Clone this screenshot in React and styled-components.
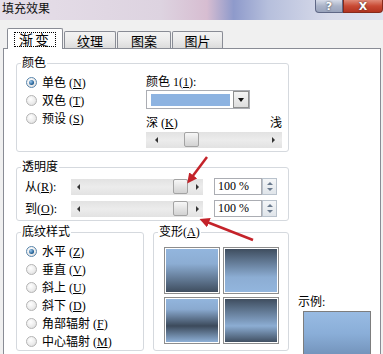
import React from 'react';
import styled, { createGlobalStyle } from 'styled-components';

const GlobalStyle = createGlobalStyle`
  html, body { margin: 0; padding: 0; background: #f0f0f0; }
  body {
    font-family: "Liberation Serif", "Noto Sans CJK SC", serif;
    font-size: 12px;
    color: #000;
  }
`;

const Window = styled.div`
  position: relative;
  width: 383px;
  height: 354px;
  overflow: hidden;
  display: flex;
  flex-direction: column;
  background: #f0f0f0;
`;

const TitleBar = styled.div`
  height: 20px;
  flex: none;
  display: flex;
  align-items: flex-start;
  justify-content: space-between;
  background: linear-gradient(90deg, #e6dfe9 0%, #ddd3e0 42%, #d7bdd1 54%, #8e9acb 61%, #b6bfdc 70%, #d8dbea 86%, #e0e3ef 100%);
`;

const Title = styled.div`
  padding: 1px 0 0 2px;
  line-height: 14px;
  font-family: "Noto Sans CJK SC", sans-serif;
  font-size: 12px;
  color: #111;
`;

const Caption = styled.div`
  display: flex;
`;

const CaptionButton = styled.div`
  width: ${p => p.$w}px;
  height: 13px;
  box-sizing: border-box;
  border: 1px solid ${p => (p.$close ? '#862a1c' : '#5f6886')};
  border-top: none;
  border-radius: ${p => (p.$close ? '0 0 4px 0' : '0 0 0 4px')};
  display: flex;
  align-items: center;
  justify-content: center;
  color: #fff;
  font: bold 11px "DejaVu Sans", sans-serif;
  line-height: 11px;
  background: ${p => (p.$close
    ? 'linear-gradient(#e08a78, #c94a34 50%, #b23320)'
    : 'linear-gradient(#d6dbe8, #aab3c8 50%, #9aa4bc)')};
  text-shadow: 0 0 2px #333;
`;

const Body = styled.div`
  flex: 1;
  min-height: 0;
  display: flex;
  flex-direction: column;
  padding: 8px 2px 0 3px;
`;

const Tabs = styled.div`
  display: flex;
  align-items: flex-start;
  height: 21px;
  margin-bottom: -1px;
  padding-left: 4px;
  gap: 1px;
  position: relative;
  z-index: 1;
`;

const Tab = styled.div`
  box-sizing: border-box;
  width: ${p => p.$w}px;
  height: ${p => (p.$active ? 21 : 17)}px;
  margin-top: ${p => (p.$active ? 0 : 3)}px;
  border: 1px solid #898c95;
  border-bottom: none;
  border-radius: 2px 2px 0 0;
  display: flex;
  align-items: center;
  justify-content: center;
  font-family: "Noto Sans CJK SC", sans-serif;
  font-size: ${p => (p.$active ? 14 : 13)}px;
  background: ${p => (p.$active ? '#fff' : 'linear-gradient(#f3f3f3, #ebebeb 50%, #dcdcdc)')};
`;

const FocusLabel = styled.span`
  border: 1px dotted #000;
  padding: 0 4px;
  line-height: 13px;
  letter-spacing: 2px;
`;

const Panel = styled.div`
  flex: 1;
  background: #fff;
  border: 1px solid #898c95;
  border-bottom: none;
  padding: 7px 0 0 12px;
  display: flex;
  flex-direction: column;
`;

const Group = styled.fieldset`
  margin: ${p => p.$mt || 0}px 0 0 ${p => p.$ml || 0}px;
  padding: 0;
  width: ${p => p.$w}px;
  box-sizing: border-box;
  border: 1px solid #d5d9de;
  border-radius: 3px;
  min-width: 0;
  flex: none;
`;

const Legend = styled.legend`
  margin-left: 4px;
  padding: 0 1px;
  line-height: 14px;
`;

const Split = styled.div`
  display: flex;
  padding: 3px 0 3px 0;
`;

const RadioList = styled.div`
  width: ${p => p.$w}px;
  box-sizing: border-box;
  padding: ${p => p.$pt || 0}px 0 0 9px;
  display: flex;
  flex-direction: column;
`;

const RadioRow = styled.label`
  height: 18px;
  display: flex;
  align-items: center;
  gap: 5px;
  white-space: nowrap;
`;

const RadioDot = styled.span`
  width: 11px;
  height: 11px;
  box-sizing: border-box;
  border-radius: 50%;
  border: 1px solid ${p => (p.$on ? '#5a86ac' : '#b4b4b4')};
  background: radial-gradient(circle at 40% 35%, #fff 0%, #ececec 55%, #d6d6d6 100%);
  display: flex;
  align-items: center;
  justify-content: center;
  &::after {
    content: '';
    display: ${p => (p.$on ? 'block' : 'none')};
    width: 5px;
    height: 5px;
    border-radius: 50%;
    background: radial-gradient(circle at 35% 35%, #9cc8ee, #1f5e93 65%, #0e3a63);
  }
`;

const Key = styled.u`
  text-underline-offset: 1px;
`;

const ColorColumn = styled.div`
  width: 136px;
  padding-top: 2px;
  display: flex;
  flex-direction: column;
`;

const FieldLabel = styled.div`
  line-height: 14px;
  white-space: nowrap;
`;

const ScaleLabels = styled.div`
  line-height: 14px;
  display: flex;
  justify-content: space-between;
  margin-top: 7px;
`;

const Combo = styled.div`
  width: 104px;
  height: 19px;
  margin-top: 1px;
  box-sizing: border-box;
  border: 1px solid #abadb3;
  background: #fff;
  display: flex;
  align-items: center;
  gap: 3px;
  padding: 0 0 0 4px;
`;

const Swatch = styled.div`
  width: 80px;
  height: 12px;
  background: #8db3e1;
`;

const ComboButton = styled.div`
  width: 16px;
  height: 17px;
  box-sizing: border-box;
  border: 1px solid #8e8f8f;
  background: linear-gradient(#f4f4f4, #dedede);
  display: flex;
  align-items: center;
  justify-content: center;
  &::after {
    content: '';
    border-left: 3.5px solid transparent;
    border-right: 3.5px solid transparent;
    border-top: 4px solid #111;
  }
`;

const Track = styled.div`
  position: relative;
  width: ${p => p.$w}px;
  height: 16px;
  margin-top: ${p => p.$mt || 0}px;
  box-sizing: border-box;
  padding: 0 ${p => p.$pr || 7}px 0 ${p => p.$pl || 9}px;
  background: linear-gradient(#e2e2e2, #ececec 50%, #e2e2e2);
  display: flex;
  align-items: center;
  justify-content: space-between;
  flex: none;
`;

const Arrow = styled.span`
  width: 0;
  height: 0;
  border-top: 3px solid transparent;
  border-bottom: 3px solid transparent;
  ${p => (p.$right ? 'border-left: 3px solid #333;' : 'border-right: 3px solid #333;')}
`;

const Thumb = styled.div`
  position: absolute;
  top: 0;
  left: ${p => p.$pos}px;
  width: 15px;
  height: 15px;
  box-sizing: border-box;
  border: 1px solid #a3a3a3;
  border-radius: 2px;
  background: linear-gradient(#f7f7f7, #e4e4e4 50%, #d2d2d2);
`;

const AlphaRows = styled.div`
  display: flex;
  flex-direction: column;
  gap: 5px;
  padding: 4px 0 3px 8px;
`;

const AlphaRow = styled.div`
  height: 17px;
  display: flex;
  align-items: center;
`;

const AlphaLabel = styled.span`
  width: 46px;
  line-height: 14px;
`;

const NumberBox = styled.div`
  margin-left: 11px;
  width: 48px;
  height: 17px;
  box-sizing: border-box;
  border: 1px solid #abadb3;
  background: #fff;
  padding-left: 3px;
  line-height: 15px;
`;

const Spinner = styled.div`
  width: 15px;
  height: 17px;
  box-sizing: border-box;
  border: 1px solid #b9c2cc;
  background: linear-gradient(#f4f6f8, #e0e5ea);
  display: flex;
  flex-direction: column;
  align-items: center;
  justify-content: space-evenly;
`;

const SpinArrow = styled.span`
  width: 0;
  height: 0;
  border-left: 3px solid transparent;
  border-right: 3px solid transparent;
  ${p => (p.$down ? 'border-top: 3px solid #6a7a8e;' : 'border-bottom: 3px solid #6a7a8e;')}
`;

const BottomRow = styled.div`
  display: flex;
  align-items: flex-start;
  margin-top: 4px;
`;

const Tiles = styled.div`
  display: grid;
  grid-template-columns: 56px 56px;
  grid-auto-rows: 47px;
  gap: 3px;
  padding: 8px 0 6px 10px;
`;

const Tile = styled.div`
  border: 1px solid #8d8d8d;
  box-shadow: inset 0 0 0 1px #fff;
  background: ${p => p.$bg};
`;

const SampleColumn = styled.div`
  margin-left: 9px;
  padding-top: 70px;
  display: flex;
  flex-direction: column;
`;

const SampleBox = styled.div`
  margin: 2px 0 0 5px;
  width: 68px;
  height: 50px;
  box-sizing: border-box;
  border: 1px solid #7d7d7d;
  background: linear-gradient(#98bbe3, #8aaed8 45%, #6e8db4);
`;

const Overlay = styled.svg`
  position: absolute;
  left: 0;
  top: 0;
  pointer-events: none;
`;

const L = '#93b6de';
const D = '#3c4a5b';
const tiles = [
  `linear-gradient(${L} 0%, #8cadd3 35%, ${D} 100%)`,
  `linear-gradient(${D} 0%, #8cadd3 65%, ${L} 100%)`,
  `linear-gradient(${L} 0%, #8aaad0 25%, ${D} 62%, ${L} 100%)`,
  `linear-gradient(${D} 0%, #8cadd3 62%, ${D} 100%)`,
];

const Radio = ({ on, children }) => (
  <RadioRow>
    <RadioDot $on={on} />
    <span>{children}</span>
  </RadioRow>
);

const Slider = ({ w, pos, mt, pl, pr }) => (
  <Track $w={w} $mt={mt} $pl={pl} $pr={pr}>
    <Arrow />
    <Arrow $right />
    <Thumb $pos={pos} />
  </Track>
);

const Alpha = ({ label, k }) => (
  <AlphaRow>
    <AlphaLabel>{label}(<Key>{k}</Key>):</AlphaLabel>
    <Slider w={132} pos={102} pl={6} pr={4} />
    <NumberBox>100 %</NumberBox>
    <Spinner>
      <SpinArrow />
      <SpinArrow $down />
    </Spinner>
  </AlphaRow>
);

export default function App() {
  return (
    <>
      <GlobalStyle />
      <Window>
        <TitleBar>
          <Title>填充效果</Title>
          <Caption>
            <CaptionButton $w={28}>?</CaptionButton>
            <CaptionButton $w={40} $close>X</CaptionButton>
          </Caption>
        </TitleBar>
        <Body>
          <Tabs>
            <Tab $active $w={56}><FocusLabel>渐变</FocusLabel></Tab>
            <Tab $w={52}>纹理</Tab>
            <Tab $w={54}>图案</Tab>
            <Tab $w={51}>图片</Tab>
          </Tabs>
          <Panel>
            <Group $w={273}>
              <Legend>颜色</Legend>
              <Split>
                <RadioList $w={129}>
                  <Radio on>单色 (<Key>N</Key>)</Radio>
                  <Radio>双色 (<Key>T</Key>)</Radio>
                  <Radio>预设 (<Key>S</Key>)</Radio>
                </RadioList>
                <ColorColumn>
                  <FieldLabel>颜色 1(<Key>1</Key>):</FieldLabel>
                  <Combo>
                    <Swatch />
                    <ComboButton />
                  </Combo>
                  <ScaleLabels>
                    <span>深 (<Key>K</Key>)</span>
                    <span>浅</span>
                  </ScaleLabels>
                  <Slider w={136} pos={38} mt={2} />
                </ColorColumn>
              </Split>
            </Group>

            <Group $w={273} $mt={8}>
              <Legend>透明度</Legend>
              <AlphaRows>
                <Alpha label="从" k="R" />
                <Alpha label="到" k="O" />
              </AlphaRows>
            </Group>

            <BottomRow>
              <Group $w={128}>
                <Legend>底纹样式</Legend>
                <RadioList $w={126} $pt={3}>
                  <Radio on>水平 (<Key>Z</Key>)</Radio>
                  <Radio>垂直 (<Key>V</Key>)</Radio>
                  <Radio>斜上 (<Key>U</Key>)</Radio>
                  <Radio>斜下 (<Key>D</Key>)</Radio>
                  <Radio>角部辐射 (<Key>F</Key>)</Radio>
                  <Radio>中心辐射 (<Key>M</Key>)</Radio>
                </RadioList>
              </Group>
              <Group $w={136} $ml={9}>
                <Legend>变形(<Key>A</Key>)</Legend>
                <Tiles>
                  {tiles.map((bg, i) => <Tile key={i} $bg={bg} />)}
                </Tiles>
              </Group>
              <SampleColumn>
                <FieldLabel>示例:</FieldLabel>
                <SampleBox />
              </SampleColumn>
            </BottomRow>
          </Panel>
        </Body>
        <Overlay width="383" height="354" viewBox="0 0 383 354">
          <defs>
            <marker id="head" viewBox="0 0 10 10" refX="2" refY="5" markerWidth="4" markerHeight="4" orient="auto">
              <path d="M0 0 L10 5 L0 10 z" fill="#c4232a" />
            </marker>
          </defs>
          <line x1="207" y1="157" x2="192" y2="177" stroke="#c4232a" strokeWidth="2.5" markerEnd="url(#head)" />
          <line x1="253" y1="240" x2="207" y2="222" stroke="#c4232a" strokeWidth="2.5" markerEnd="url(#head)" />
        </Overlay>
      </Window>
    </>
  );
}
